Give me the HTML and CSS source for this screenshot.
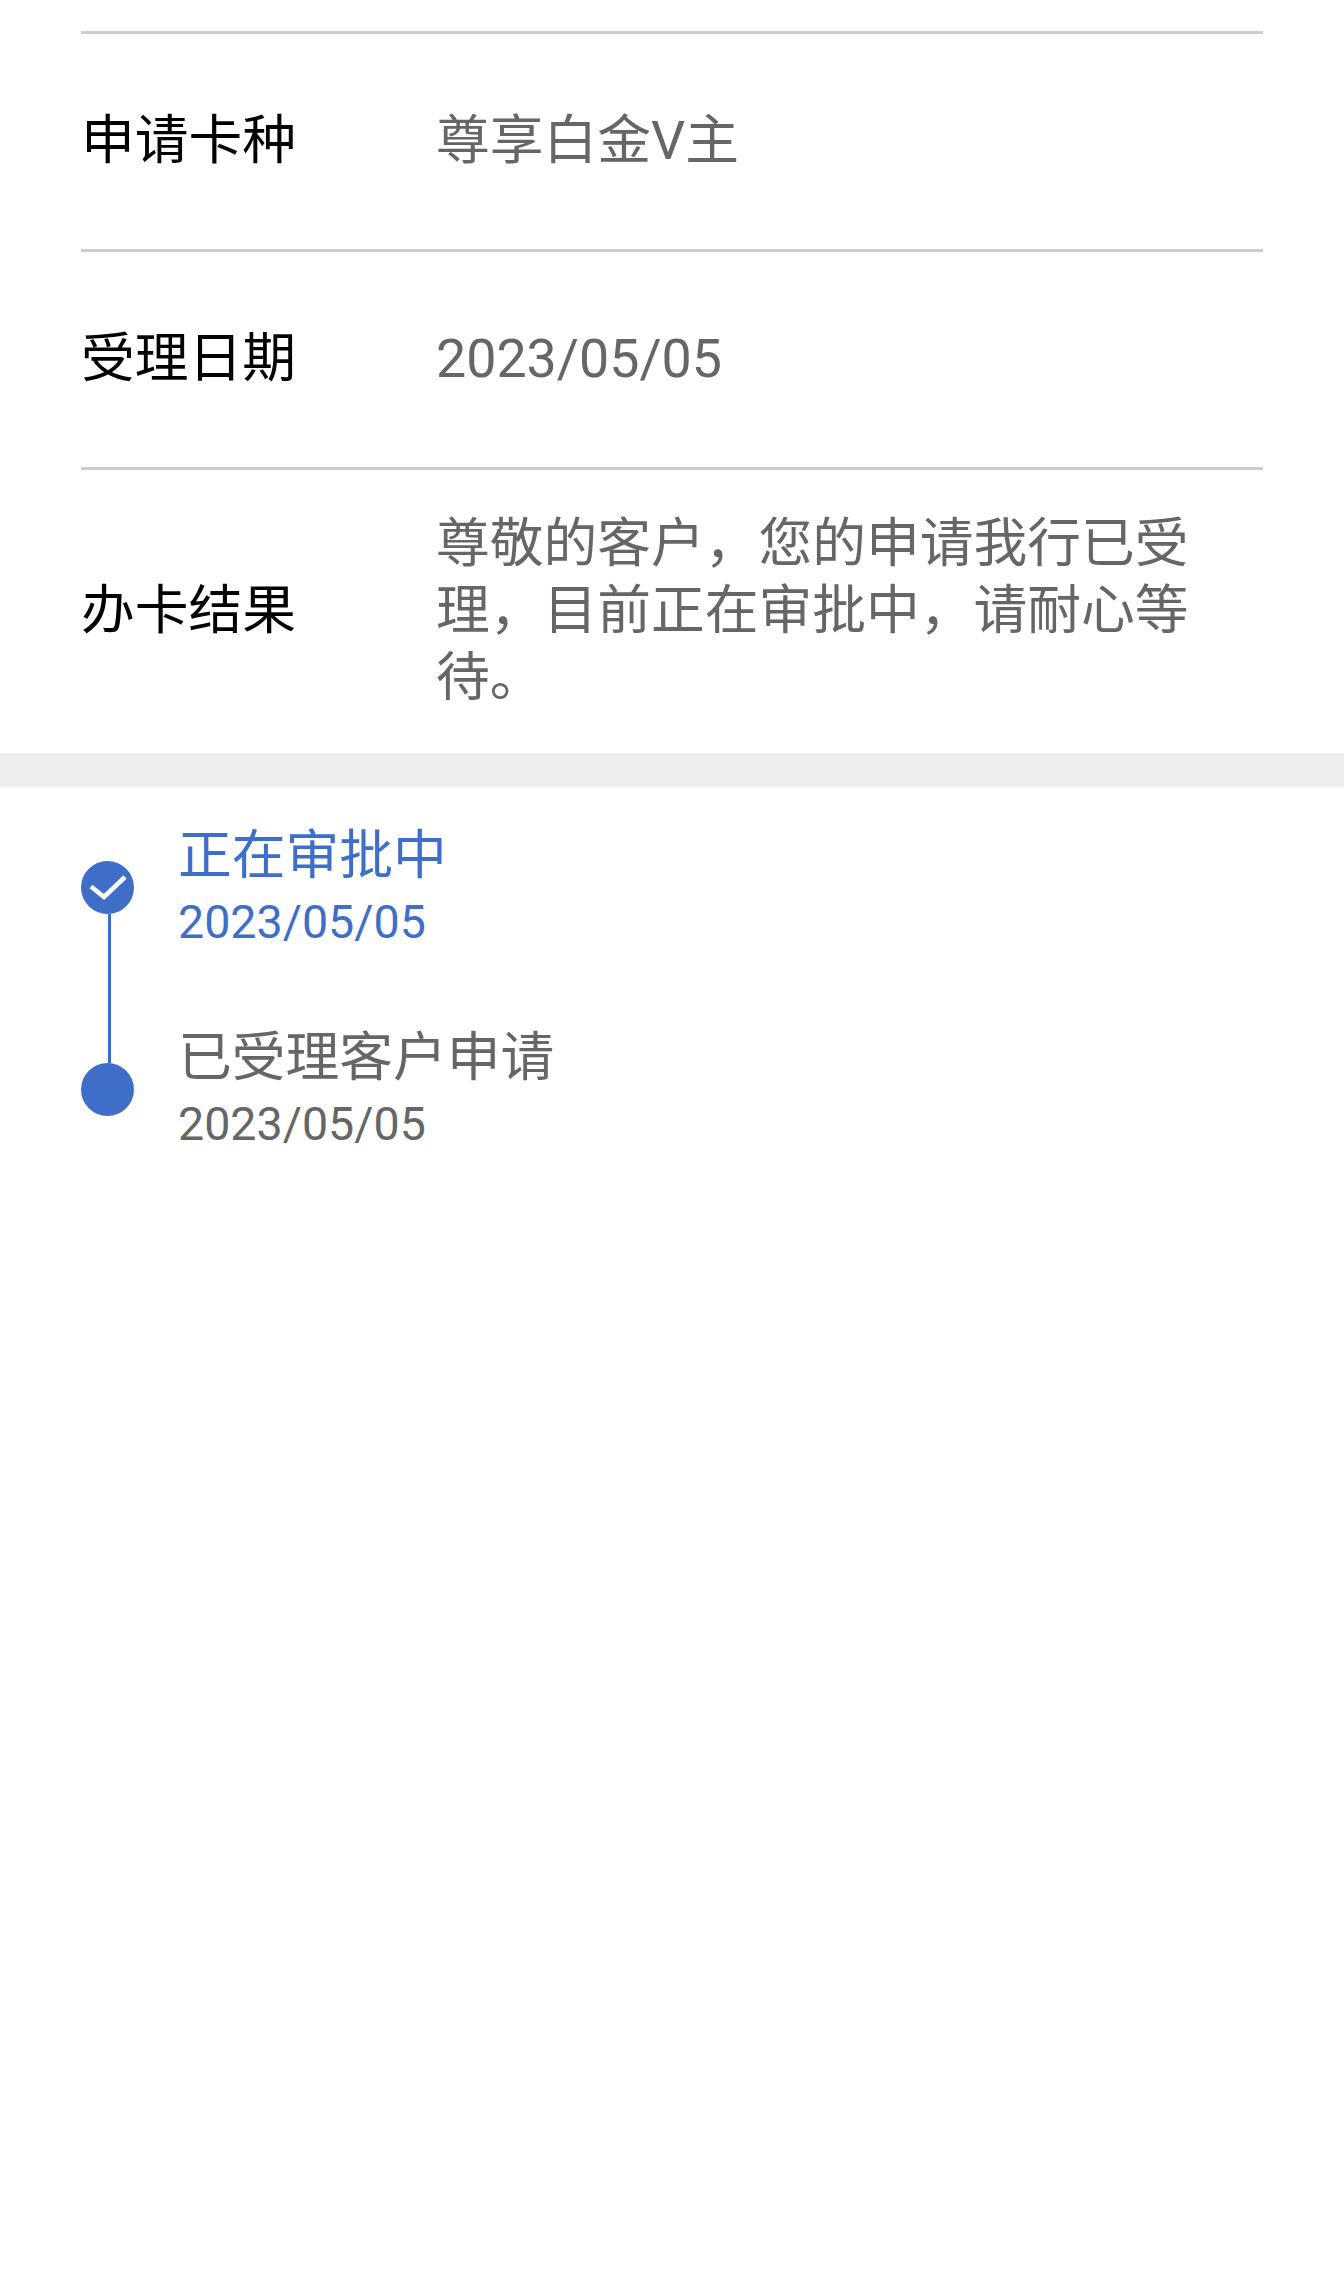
FILE: index.html
```html
<!DOCTYPE html>
<html lang="zh-CN">
<head>
<meta charset="utf-8">
<title>办卡进度</title>
<link rel="stylesheet" href="styles.css">
</head>
<body>
<section class="info">
  <div class="row">
    <div class="label">申请卡种</div>
    <div class="value">尊享白金V主</div>
  </div>
  <div class="row">
    <div class="label">受理日期</div>
    <div class="value">2023/05/05</div>
  </div>
  <div class="row row-result">
    <div class="label">办卡结果</div>
    <div class="value">尊敬的客户，您的申请我行已受理，目前正在审批中，请耐心等待。</div>
  </div>
</section>
<div class="band"></div>
<section class="timeline">
  <div class="step step-active">
    <div class="marker">
      <span class="dot">
        <svg class="check" viewBox="0 0 53 53" width="53" height="53" aria-hidden="true"><path d="M10 25.500 L23 36 L44 16" fill="none" stroke="#fff" stroke-width="4.500"/></svg>
      </span>
      <span class="connector"></span>
    </div>
    <div class="text">
      <div class="title">正在审批中</div>
      <div class="date">2023/05/05</div>
    </div>
  </div>
  <div class="step">
    <div class="marker">
      <span class="dot"></span>
    </div>
    <div class="text">
      <div class="title">已受理客户申请</div>
      <div class="date">2023/05/05</div>
    </div>
  </div>
</section>
</body>
</html>
```
FILE: styles.css
```css
html, body {
  margin: 0;
  padding: 0;
  background: #fff;
}
body {
  min-height: 2287px;
  font-family: Roboto, "Noto Sans CJK SC", sans-serif;
  font-size: 53.76px;
}
.info {
  padding: 31px 81px 0;
}
.row {
  display: flex;
  align-items: center;
  height: 212px;
  padding-bottom: 3px;
  border-top: 3px solid #ccc;
}
.row-result {
  height: 280px;
}
.label {
  width: 355px;
  flex: none;
  color: #000;
  line-height: 67px;
}
.value {
  flex: 1;
  padding-right: 71px;
  color: #666;
  line-height: 67px;
}
.band {
  height: 34px;
  background: #eee;
}
.timeline {
  padding: 33px 81px 0;
}
.step {
  display: flex;
  height: 202px;
  color: #666;
}
.step-active {
  color: #3f6ec9;
}
.marker {
  position: relative;
  width: 53px;
  flex: none;
  margin-right: 44px;
  padding-top: 41px;
}
.dot {
  display: block;
  width: 53px;
  height: 53px;
  border-radius: 50%;
  background: #3f6ec9;
}
.check {
  display: block;
}
.connector {
  position: absolute;
  left: 27px;
  top: 94px;
  width: 3px;
  height: 149px;
  background: #3f6ec9;
}
.text {
  padding-top: 2px;
}
.title {
  line-height: 67px;
}
.date {
  font-size: 46.59px;
  line-height: 67px;
}
```
